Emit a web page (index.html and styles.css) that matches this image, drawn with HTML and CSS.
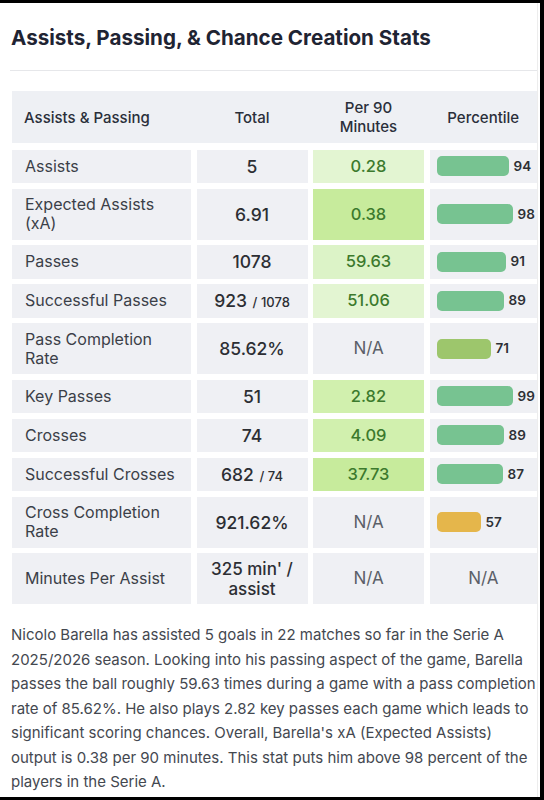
FILE: index.html
```html
<!DOCTYPE html>
<html lang="en">
<head>
<meta charset="utf-8">
<title>Assists, Passing, & Chance Creation Stats</title>
<link rel="stylesheet" href="styles.css">
</head>
<body>
<div class="frame">
  <div class="page">
    <h2 class="title">Assists, Passing, &amp; Chance Creation Stats</h2>
    <hr class="divider">
    <div class="table">
      <div class="thead">
        <div class="th th-left">Assists &amp; Passing</div>
        <div class="th">Total</div>
        <div class="th">Per 90<br>Minutes</div>
        <div class="th">Percentile</div>
      </div>
      <div class="tbody">
        <div class="cell label">Assists</div>
        <div class="cell total">5</div>
        <div class="cell p90 g1">0.28</div>
        <div class="cell pct"><span class="bar green" style="width:72px"></span><span class="num">94</span></div>

        <div class="cell label">Expected Assists<br>(xA)</div>
        <div class="cell total">6.91</div>
        <div class="cell p90 g4">0.38</div>
        <div class="cell pct"><span class="bar green" style="width:76px"></span><span class="num">98</span></div>

        <div class="cell label">Passes</div>
        <div class="cell total">1078</div>
        <div class="cell p90 g2">59.63</div>
        <div class="cell pct"><span class="bar green" style="width:69px"></span><span class="num">91</span></div>

        <div class="cell label">Successful Passes</div>
        <div class="cell total"><span>923 <span class="of">/ 1078</span></span></div>
        <div class="cell p90 g1">51.06</div>
        <div class="cell pct"><span class="bar green" style="width:67px"></span><span class="num">89</span></div>

        <div class="cell label">Pass Completion<br>Rate</div>
        <div class="cell total">85.62%</div>
        <div class="cell na">N/A</div>
        <div class="cell pct"><span class="bar olive" style="width:54px"></span><span class="num">71</span></div>

        <div class="cell label">Key Passes</div>
        <div class="cell total">51</div>
        <div class="cell p90 g3">2.82</div>
        <div class="cell pct"><span class="bar green" style="width:76px"></span><span class="num">99</span></div>

        <div class="cell label">Crosses</div>
        <div class="cell total">74</div>
        <div class="cell p90 g3">4.09</div>
        <div class="cell pct"><span class="bar green" style="width:67px"></span><span class="num">89</span></div>

        <div class="cell label">Successful Crosses</div>
        <div class="cell total"><span>682 <span class="of">/ 74</span></span></div>
        <div class="cell p90 g4">37.73</div>
        <div class="cell pct"><span class="bar green" style="width:66px"></span><span class="num">87</span></div>

        <div class="cell label">Cross Completion<br>Rate</div>
        <div class="cell total">921.62%</div>
        <div class="cell na">N/A</div>
        <div class="cell pct"><span class="bar amber" style="width:44px"></span><span class="num">57</span></div>

        <div class="cell label">Minutes Per Assist</div>
        <div class="cell total two">325 min' /<br>assist</div>
        <div class="cell na">N/A</div>
        <div class="cell na">N/A</div>
      </div>
    </div>
    <p class="summary">Nicolo Barella has assisted 5 goals in 22 matches so far in the Serie A 2025/2026 season. Looking into his passing aspect of the game, Barella passes the ball roughly 59.63 times during a game with a pass completion rate of 85.62%. He also plays 2.82 key passes each game which leads to significant scoring chances. Overall, Barella's xA (Expected Assists) output is 0.38 per 90 minutes. This stat puts him above 98 percent of the players in the Serie A.</p>
  </div>
</div>
</body>
</html>
```
FILE: styles.css
```css
html, body {
  margin: 0;
  padding: 0;
  background: #000;
}
body {
  width: 544px;
  height: 800px;
  overflow: hidden;
  font-family: Inter, "Noto Sans", "Liberation Sans", sans-serif;
}
.frame {
  margin-top: 3px;
  width: 540px;
  height: 794px;
  background: #fff;
  overflow: hidden;
}
.page {
  width: 525px;
  height: 794px;
  padding: 0 0 0 12px;
  border-right: 1px solid #ededed;
}
.title {
  margin: 0 0 0 -1px;
  padding-top: 22px;
  font-size: 20.6px;
  line-height: 25px;
  font-weight: 700;
  color: #1f2433;
}
.divider {
  margin: 20px 0 0 -2px;
  border: 0;
  height: 1px;
  background: #e6e7ea;
}
.table {
  margin-top: 20px;
}
.thead, .tbody {
  display: grid;
  grid-template-columns: 179px 111px 111px 1fr;
  column-gap: 5.5px;
}
.thead {
  background: #eef0f4;
  padding: 7px 0;
  margin-bottom: 6.5px;
}
.tbody {
  row-gap: 5.5px;
}
.th {
  display: flex;
  align-items: center;
  justify-content: center;
  text-align: center;
  font-size: 15px;
  line-height: 19px;
  font-weight: 500;
  color: #2a2f3a;
}
.th-left {
  justify-content: flex-start;
  text-align: left;
  padding-left: 12px;
}
.cell {
  display: flex;
  align-items: center;
  min-height: 33.5px;
  box-sizing: border-box;
  padding: 6.5px 0;
  background: #eff0f4;
  line-height: 19px;
}
.label {
  padding-left: 13px;
  font-size: 16px;
  color: #3b3f48;
}
.total {
  justify-content: center;
  text-align: center;
  font-size: 17.5px;
  font-weight: 500;
  color: #2c2e33;
}
.total.two {
  font-size: 17px;
  line-height: 20px;
  padding: 5.5px 0;
}
.of {
  font-size: 13px;
  line-height: 0;
  font-weight: 500;
  margin-left: 1px;
}
.p90 {
  justify-content: center;
  font-size: 16.5px;
  font-weight: 500;
  color: #3c7a2d;
}
.g1 { background: #e3f5d2; }
.g2 { background: #dcf3c7; }
.g3 { background: #d1f0ae; }
.g4 { background: #c7eb9c; }
.na {
  justify-content: center;
  font-size: 17px;
  color: #5b5f68;
}
.pct {
  padding-left: 7px;
}
.bar {
  display: block;
  flex: none;
  height: 20px;
  border-radius: 5px;
}
.green { background: #77c391; }
.olive { background: #9dc66c; }
.amber { background: #e5b64b; }
.num {
  margin-left: 5px;
  font-size: 13.5px;
  font-weight: 600;
  color: #2e3035;
}
.summary {
  margin: 19px 0 0 -1px;
  font-size: 15px;
  line-height: 24.5px;
  color: #444850;
}
```
